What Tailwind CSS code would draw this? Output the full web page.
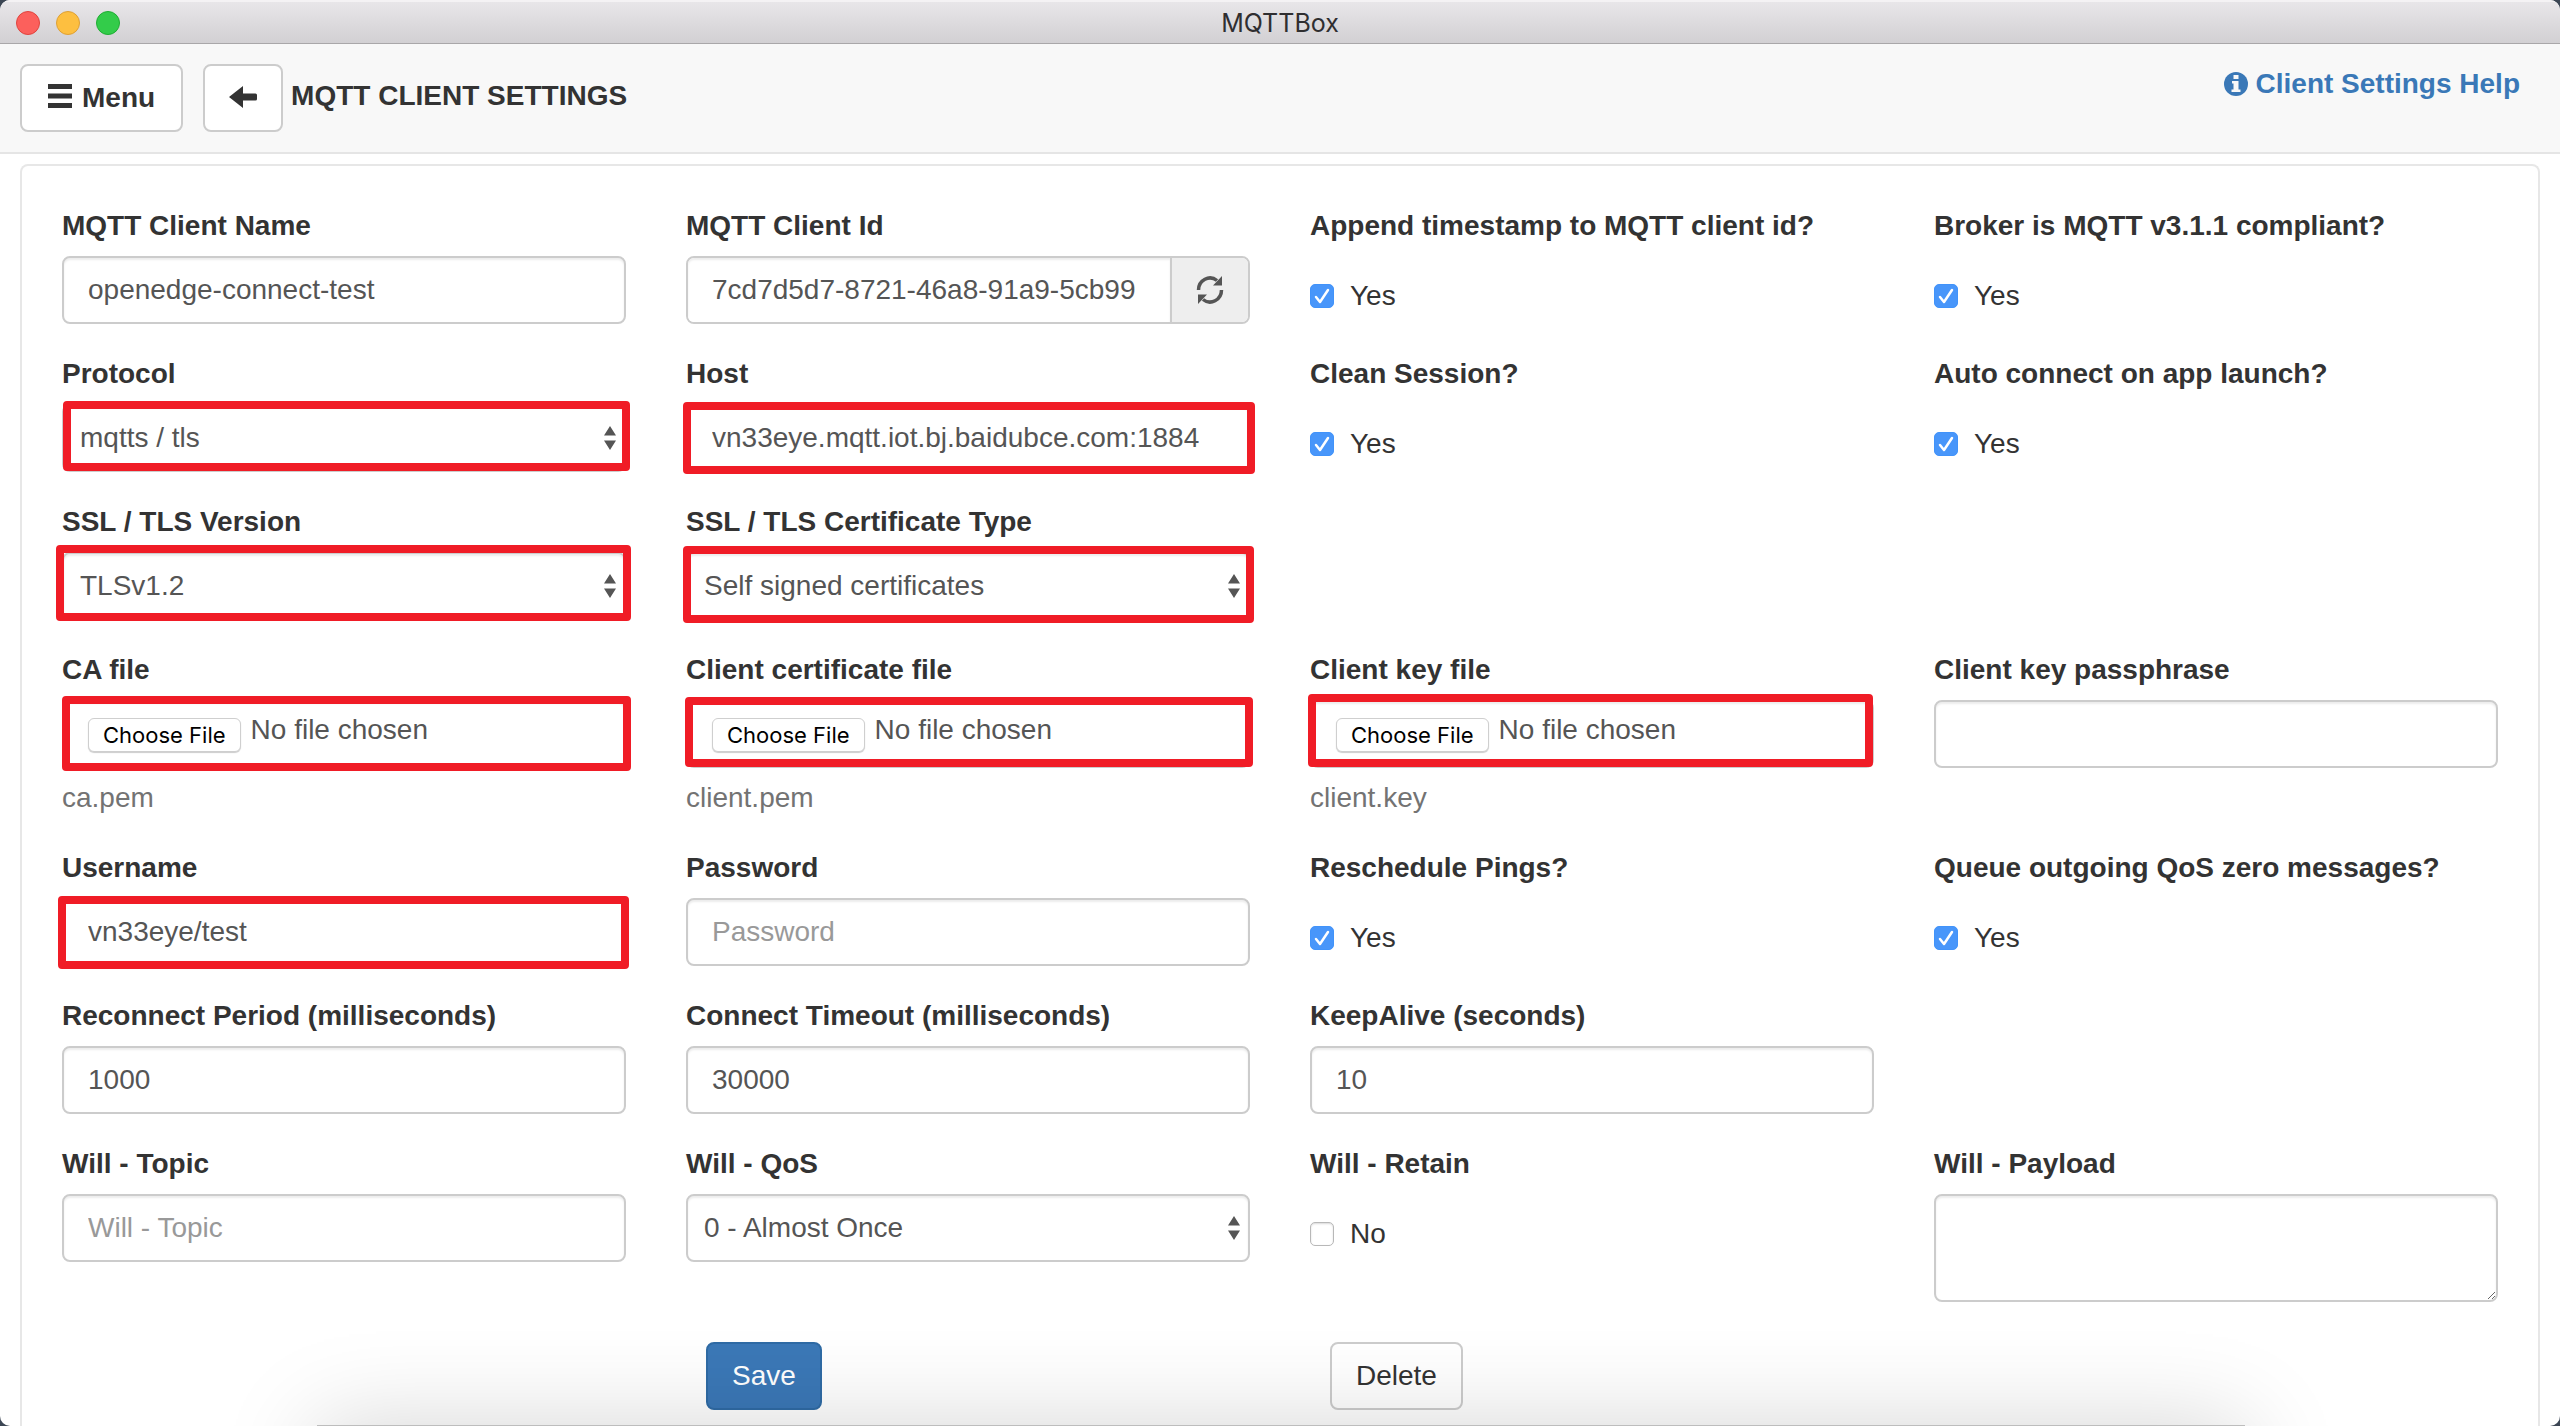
<!DOCTYPE html>
<html lang="en">
<head>
<meta charset="utf-8">
<title>MQTTBox</title>
<script src="https://cdn.jsdelivr.net/npm/@tailwindcss/browser@4"></script>
</head>
<body class="bg-[#3c4654]">
<div class="relative flex h-screen flex-col overflow-hidden rounded-[10px] bg-white font-['Liberation_Sans',Arial,sans-serif] text-[28px] leading-10 text-[#333]">

  <div class="grid h-11 shrink-0 grid-cols-3 items-center border-t-2 border-b border-t-[#f4f2f4] border-b-[#a9a7a9] bg-linear-to-b from-[#e8e6e9] to-[#d2d0d3] px-4">
    <div class="flex gap-4">
      <span class="size-6 rounded-full border border-[#e0443e] bg-[#fc605c]"></span>
      <span class="size-6 rounded-full border border-[#dea035] bg-[#fdbf40]"></span>
      <span class="size-6 rounded-full border border-[#1fad33] bg-[#33cc4a]"></span>
    </div>
    <h1 class="text-center font-['Inter',sans-serif] text-[25px] leading-8 text-[#2f2e30]">MQTTBox</h1>
  </div>

  <header class="flex h-[110px] shrink-0 items-start justify-between border-b-2 border-[#e5e5e5] bg-[#f8f8f8] pr-10 pl-5">
    <div class="flex pt-5">
      <button type="button" class="flex h-17 items-center gap-[10px] rounded-lg border-2 border-[#ccc] bg-white px-[26px] font-bold">
        <svg class="mb-1 size-6" viewBox="0 0 24 24" fill="#333" aria-hidden="true"><path d="M0 0h24v5H0zM0 9.500h24v5H0zM0 19h24v5H0z"/></svg>Menu
      </button>
      <button type="button" aria-label="Back" class="ml-5 flex h-17 w-20 items-center justify-center rounded-lg border-2 border-[#ccc] bg-white">
        <svg class="h-6 w-7" viewBox="0 0 28 24" fill="#333" aria-hidden="true"><path d="M0 11 14 0v7.500h12.500q1.500 0 1.500 1.500v4q0 1.500-1.500 1.500H14V22z"/></svg>
      </button>
      <h2 class="ml-2 pt-3 font-bold">MQTT CLIENT SETTINGS</h2>
    </div>
    <a href="#" class="flex items-center gap-2 pt-5 font-bold text-[#3a78b7]">
      <svg class="size-6" viewBox="0 0 24 24" aria-hidden="true"><circle cx="12" cy="12" r="12" fill="#3a78b7"/><path fill="#f8f8f8" d="M9.500 3h5v4h-5zM8 9h6.500v8.500H16.500V20H7.500v-2.500h2V11.500H8z"/></svg>Client Settings Help
    </a>
  </header>

  <main class="flex flex-1 flex-col px-5 pt-[10px]">
    <form class="flex-1 rounded-t-lg border-2 border-b-0 border-[#e7e7e7] px-10 pt-10">
      <div class="grid grid-cols-4 gap-x-15 gap-y-[30px]">

        <div class="flex flex-col gap-[10px]">
          <label for="name" class="font-bold">MQTT Client Name</label>
          <input id="name" type="text" value="openedge-connect-test" class="h-17 w-full rounded-lg border-2 border-[#ccc] bg-white px-6 text-[#555] shadow-[inset_0_2px_2px_rgba(0,0,0,0.075)]">
        </div>
        <div class="flex flex-col gap-[10px]">
          <label for="cid" class="font-bold">MQTT Client Id</label>
          <div class="flex h-17 rounded-lg border-2 border-[#ccc]">
            <input id="cid" type="text" value="7cd7d5d7-8721-46a8-91a9-5cb99" class="min-w-0 flex-1 rounded-l-md bg-white px-6 text-[#555] shadow-[inset_0_2px_2px_rgba(0,0,0,0.075)]">
            <button type="button" aria-label="Generate client id" class="flex w-[78px] items-center justify-center rounded-r-md border-l-2 border-[#ccc] bg-[#eee]">
              <svg class="size-7" viewBox="0 0 28 28" aria-hidden="true"><path d="M2.500 14A11.500 12 0 0 1 21 4.500M25.500 14A11.500 12 0 0 1 7 23.500" fill="none" stroke="#555" stroke-width="3.500"/><path fill="#555" d="M26 0v9.500H17zM2 28V18.500H11z"/></svg>
            </button>
          </div>
        </div>
        <div class="flex flex-col">
          <span class="font-bold">Append timestamp to MQTT client id?</span>
          <label class="mt-[30px] flex items-center gap-4">
            <span class="grid size-6"><input type="checkbox" checked class="col-start-1 row-start-1 size-6 appearance-none rounded-[5px] border border-[#b8b8b8] bg-white checked:border-[#4193fa] checked:bg-[#4896fa]"><svg class="pointer-events-none col-start-1 row-start-1 size-6" viewBox="0 0 24 24" fill="none" stroke="#fff" stroke-width="2.500" stroke-linecap="round" stroke-linejoin="round" aria-hidden="true"><path d="m6 13 4 5 8-12"/></svg></span>Yes
          </label>
        </div>
        <div class="flex flex-col">
          <span class="font-bold">Broker is MQTT v3.1.1 compliant?</span>
          <label class="mt-[30px] flex items-center gap-4">
            <span class="grid size-6"><input type="checkbox" checked class="col-start-1 row-start-1 size-6 appearance-none rounded-[5px] border border-[#b8b8b8] bg-white checked:border-[#4193fa] checked:bg-[#4896fa]"><svg class="pointer-events-none col-start-1 row-start-1 size-6" viewBox="0 0 24 24" fill="none" stroke="#fff" stroke-width="2.500" stroke-linecap="round" stroke-linejoin="round" aria-hidden="true"><path d="m6 13 4 5 8-12"/></svg></span>Yes
          </label>
        </div>

        <div class="flex flex-col gap-[10px]">
          <label for="protocol" class="font-bold">Protocol</label>
          <div class="relative">
            <select id="protocol" class="block h-17 w-full appearance-none rounded-lg border-2 border-[#ccc] bg-white px-4 text-[#555] shadow-[inset_0_2px_2px_rgba(0,0,0,0.075)]"><option>mqtts / tls</option></select>
            <svg class="pointer-events-none absolute top-[22px] right-[10px] h-6 w-3" viewBox="0 0 12 24" fill="#555" aria-hidden="true"><path d="M6 0l6 9.500H0zM6 24l6-9.500H0z"/></svg>
            <span class="pointer-events-none absolute -top-[3px] -right-1 bottom-px left-px rounded-sm border-8 border-[#f01c26]"></span>
          </div>
        </div>
        <div class="flex flex-col gap-[10px]">
          <label for="host" class="font-bold">Host</label>
          <div class="relative">
            <input id="host" type="text" value="vn33eye.mqtt.iot.bj.baidubce.com:1884" class="block h-17 w-full rounded-lg border-2 border-[#ccc] bg-white px-6 text-[#555] shadow-[inset_0_2px_2px_rgba(0,0,0,0.075)]">
            <span class="pointer-events-none absolute -top-[2px] -right-[5px] -bottom-[2px] -left-[3px] rounded-sm border-8 border-[#f01c26]"></span>
          </div>
        </div>
        <div class="flex flex-col">
          <span class="font-bold">Clean Session?</span>
          <label class="mt-[30px] flex items-center gap-4">
            <span class="grid size-6"><input type="checkbox" checked class="col-start-1 row-start-1 size-6 appearance-none rounded-[5px] border border-[#b8b8b8] bg-white checked:border-[#4193fa] checked:bg-[#4896fa]"><svg class="pointer-events-none col-start-1 row-start-1 size-6" viewBox="0 0 24 24" fill="none" stroke="#fff" stroke-width="2.500" stroke-linecap="round" stroke-linejoin="round" aria-hidden="true"><path d="m6 13 4 5 8-12"/></svg></span>Yes
          </label>
        </div>
        <div class="flex flex-col">
          <span class="font-bold">Auto connect on app launch?</span>
          <label class="mt-[30px] flex items-center gap-4">
            <span class="grid size-6"><input type="checkbox" checked class="col-start-1 row-start-1 size-6 appearance-none rounded-[5px] border border-[#b8b8b8] bg-white checked:border-[#4193fa] checked:bg-[#4896fa]"><svg class="pointer-events-none col-start-1 row-start-1 size-6" viewBox="0 0 24 24" fill="none" stroke="#fff" stroke-width="2.500" stroke-linecap="round" stroke-linejoin="round" aria-hidden="true"><path d="m6 13 4 5 8-12"/></svg></span>Yes
          </label>
        </div>

        <div class="flex flex-col gap-[10px]">
          <label for="tlsver" class="font-bold">SSL / TLS Version</label>
          <div class="relative">
            <select id="tlsver" class="block h-17 w-full appearance-none rounded-lg border-2 border-[#ccc] bg-white px-4 text-[#555] shadow-[inset_0_2px_2px_rgba(0,0,0,0.075)]"><option>TLSv1.2</option></select>
            <svg class="pointer-events-none absolute top-[22px] right-[10px] h-6 w-3" viewBox="0 0 12 24" fill="#555" aria-hidden="true"><path d="M6 0l6 9.500H0zM6 24l6-9.500H0z"/></svg>
            <span class="pointer-events-none absolute -top-[7px] -right-[5px] -bottom-px -left-[6px] rounded-sm border-8 border-[#f01c26]"></span>
          </div>
        </div>
        <div class="flex flex-col gap-[10px]">
          <label for="certtype" class="font-bold">SSL / TLS Certificate Type</label>
          <div class="relative">
            <select id="certtype" class="block h-17 w-full appearance-none rounded-lg border-2 border-[#ccc] bg-white px-4 text-[#555] shadow-[inset_0_2px_2px_rgba(0,0,0,0.075)]"><option>Self signed certificates</option></select>
            <svg class="pointer-events-none absolute top-[22px] right-[10px] h-6 w-3" viewBox="0 0 12 24" fill="#555" aria-hidden="true"><path d="M6 0l6 9.500H0zM6 24l6-9.500H0z"/></svg>
            <span class="pointer-events-none absolute -top-[6px] -right-1 -bottom-[3px] -left-[3px] rounded-sm border-8 border-[#f01c26]"></span>
          </div>
        </div>

        <div class="col-start-1 flex flex-col gap-[10px]">
          <label for="ca" class="font-bold">CA file</label>
          <div class="relative">
            <input id="ca" type="file" class="block h-17 w-full rounded-lg border-2 border-[#ccc] bg-white px-6 py-2 text-[#555] shadow-[inset_0_2px_2px_rgba(0,0,0,0.075)] file:mr-[10px] file:h-[34px] file:rounded-md file:border file:border-solid file:border-[#cfcfcf] file:bg-white file:px-[14px] file:align-[-4px] file:font-['Inter',sans-serif] file:text-[22px] file:leading-8 file:text-black file:shadow-[0_1px_1px_rgba(0,0,0,0.2)]">
            <span class="pointer-events-none absolute -top-1 -right-[5px] -bottom-[3px] left-0 rounded-sm border-8 border-[#f01c26]"></span>
          </div>
          <p class="text-[#737373]">ca.pem</p>
        </div>
        <div class="flex flex-col gap-[10px]">
          <label for="cert" class="font-bold">Client certificate file</label>
          <div class="relative">
            <input id="cert" type="file" class="block h-17 w-full rounded-lg border-2 border-[#ccc] bg-white px-6 py-2 text-[#555] shadow-[inset_0_2px_2px_rgba(0,0,0,0.075)] file:mr-[10px] file:h-[34px] file:rounded-md file:border file:border-solid file:border-[#cfcfcf] file:bg-white file:px-[14px] file:align-[-4px] file:font-['Inter',sans-serif] file:text-[22px] file:leading-8 file:text-black file:shadow-[0_1px_1px_rgba(0,0,0,0.2)]">
            <span class="pointer-events-none absolute -top-[3px] -right-[3px] bottom-px -left-px rounded-sm border-8 border-[#f01c26]"></span>
          </div>
          <p class="text-[#737373]">client.pem</p>
        </div>
        <div class="flex flex-col gap-[10px]">
          <label for="key" class="font-bold">Client key file</label>
          <div class="relative">
            <input id="key" type="file" class="block h-17 w-full rounded-lg border-2 border-[#ccc] bg-white px-6 py-2 text-[#555] shadow-[inset_0_2px_2px_rgba(0,0,0,0.075)] file:mr-[10px] file:h-[34px] file:rounded-md file:border file:border-solid file:border-[#cfcfcf] file:bg-white file:px-[14px] file:align-[-4px] file:font-['Inter',sans-serif] file:text-[22px] file:leading-8 file:text-black file:shadow-[0_1px_1px_rgba(0,0,0,0.2)]">
            <span class="pointer-events-none absolute -top-[6px] right-px bottom-px -left-[2px] rounded-sm border-8 border-[#f01c26]"></span>
          </div>
          <p class="text-[#737373]">client.key</p>
        </div>
        <div class="flex flex-col gap-[10px]">
          <label for="pass" class="font-bold">Client key passphrase</label>
          <input id="pass" type="text" class="h-17 w-full rounded-lg border-2 border-[#ccc] bg-white px-6 text-[#555] shadow-[inset_0_2px_2px_rgba(0,0,0,0.075)]">
        </div>

        <div class="flex flex-col gap-[10px]">
          <label for="user" class="font-bold">Username</label>
          <div class="relative">
            <input id="user" type="text" value="vn33eye/test" class="block h-17 w-full rounded-lg border-2 border-[#ccc] bg-white px-6 text-[#555] shadow-[inset_0_2px_2px_rgba(0,0,0,0.075)]">
            <span class="pointer-events-none absolute -top-[2px] -right-[3px] -bottom-[3px] -left-1 rounded-sm border-8 border-[#f01c26]"></span>
          </div>
        </div>
        <div class="flex flex-col gap-[10px]">
          <label for="pwd" class="font-bold">Password</label>
          <input id="pwd" type="password" placeholder="Password" class="h-17 w-full rounded-lg border-2 border-[#ccc] bg-white px-6 text-[#555] shadow-[inset_0_2px_2px_rgba(0,0,0,0.075)] placeholder:text-[#999]">
        </div>
        <div class="flex flex-col">
          <span class="font-bold">Reschedule Pings?</span>
          <label class="mt-[30px] flex items-center gap-4">
            <span class="grid size-6"><input type="checkbox" checked class="col-start-1 row-start-1 size-6 appearance-none rounded-[5px] border border-[#b8b8b8] bg-white checked:border-[#4193fa] checked:bg-[#4896fa]"><svg class="pointer-events-none col-start-1 row-start-1 size-6" viewBox="0 0 24 24" fill="none" stroke="#fff" stroke-width="2.500" stroke-linecap="round" stroke-linejoin="round" aria-hidden="true"><path d="m6 13 4 5 8-12"/></svg></span>Yes
          </label>
        </div>
        <div class="flex flex-col">
          <span class="font-bold">Queue outgoing QoS zero messages?</span>
          <label class="mt-[30px] flex items-center gap-4">
            <span class="grid size-6"><input type="checkbox" checked class="col-start-1 row-start-1 size-6 appearance-none rounded-[5px] border border-[#b8b8b8] bg-white checked:border-[#4193fa] checked:bg-[#4896fa]"><svg class="pointer-events-none col-start-1 row-start-1 size-6" viewBox="0 0 24 24" fill="none" stroke="#fff" stroke-width="2.500" stroke-linecap="round" stroke-linejoin="round" aria-hidden="true"><path d="m6 13 4 5 8-12"/></svg></span>Yes
          </label>
        </div>

        <div class="flex flex-col gap-[10px]">
          <label for="reconnect" class="font-bold">Reconnect Period (milliseconds)</label>
          <input id="reconnect" type="text" value="1000" class="h-17 w-full rounded-lg border-2 border-[#ccc] bg-white px-6 text-[#555] shadow-[inset_0_2px_2px_rgba(0,0,0,0.075)]">
        </div>
        <div class="flex flex-col gap-[10px]">
          <label for="timeout" class="font-bold">Connect Timeout (milliseconds)</label>
          <input id="timeout" type="text" value="30000" class="h-17 w-full rounded-lg border-2 border-[#ccc] bg-white px-6 text-[#555] shadow-[inset_0_2px_2px_rgba(0,0,0,0.075)]">
        </div>
        <div class="flex flex-col gap-[10px]">
          <label for="keepalive" class="font-bold">KeepAlive (seconds)</label>
          <input id="keepalive" type="text" value="10" class="h-17 w-full rounded-lg border-2 border-[#ccc] bg-white px-6 text-[#555] shadow-[inset_0_2px_2px_rgba(0,0,0,0.075)]">
        </div>

        <div class="col-start-1 flex flex-col gap-[10px]">
          <label for="topic" class="font-bold">Will - Topic</label>
          <input id="topic" type="text" placeholder="Will - Topic" class="h-17 w-full rounded-lg border-2 border-[#ccc] bg-white px-6 text-[#555] shadow-[inset_0_2px_2px_rgba(0,0,0,0.075)] placeholder:text-[#999]">
        </div>
        <div class="flex flex-col gap-[10px]">
          <label for="qos" class="font-bold">Will - QoS</label>
          <div class="relative">
            <select id="qos" class="block h-17 w-full appearance-none rounded-lg border-2 border-[#ccc] bg-white px-4 text-[#555] shadow-[inset_0_2px_2px_rgba(0,0,0,0.075)]"><option>0 - Almost Once</option></select>
            <svg class="pointer-events-none absolute top-[22px] right-[10px] h-6 w-3" viewBox="0 0 12 24" fill="#555" aria-hidden="true"><path d="M6 0l6 9.500H0zM6 24l6-9.500H0z"/></svg>
          </div>
        </div>
        <div class="flex flex-col">
          <span class="font-bold">Will - Retain</span>
          <label class="mt-[30px] flex items-center gap-4">
            <input type="checkbox" class="size-6 appearance-none rounded-[5px] border border-[#b8b8b8] bg-white shadow-[inset_0_1px_2px_rgba(0,0,0,0.15)]">No
          </label>
        </div>
        <div class="flex flex-col gap-[10px]">
          <label for="payload" class="font-bold">Will - Payload</label>
          <textarea id="payload" class="block h-27 w-full resize rounded-lg border-2 border-[#ccc] bg-white px-6 py-3 text-[#555] shadow-[inset_0_2px_2px_rgba(0,0,0,0.075)]"></textarea>
        </div>
      </div>

      <div class="mt-10 grid grid-cols-4 gap-x-15">
        <div class="col-start-2 pl-5"><button type="submit" class="h-17 rounded-lg border-2 border-[#2f6ba5] bg-[#3b78b7] px-6 text-white">Save</button></div>
        <div class="pl-5"><button type="button" class="h-17 rounded-lg border-2 border-[#ccc] bg-white px-6">Delete</button></div>
      </div>
    </form>
  </main>

  <!-- shadow cast by the window sitting below the lower edge -->
  <div class="pointer-events-none absolute inset-0 overflow-hidden">
    <div class="absolute top-[calc(100%-1px)] right-[12.3%] left-[12.4%] h-96 bg-[#bdbdbd] shadow-[0_0_90px_rgba(0,0,0,0.17)]"></div>
  </div>
</div>
</body>
</html>
